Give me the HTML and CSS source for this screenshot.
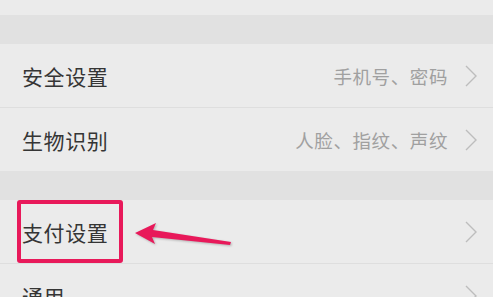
FILE: index.html
```html
<!DOCTYPE html>
<html lang="zh-CN">
<head>
<meta charset="utf-8">
<link rel="stylesheet" href="styles.css">
</head>
<body>
<div class="page">
  <div class="stub"></div>
  <div class="gap"></div>
  <div class="group">
    <div class="row">
      <span class="title">安全设置</span>
      <span class="right"><span class="sub">手机号、密码</span><svg class="chev" width="12" height="22" viewBox="0 0 12 22"><polyline points="1,1 11,11 1,21" fill="none" stroke="#bdbdbd" stroke-width="1.4"/></svg></span>
    </div>
    <div class="row">
      <span class="title">生物识别</span>
      <span class="right"><span class="sub">人脸、指纹、声纹</span><svg class="chev" width="12" height="22" viewBox="0 0 12 22"><polyline points="1,1 11,11 1,21" fill="none" stroke="#bdbdbd" stroke-width="1.4"/></svg></span>
    </div>
  </div>
  <div class="gap"></div>
  <div class="group">
    <div class="row">
      <span class="title">支付设置</span>
      <span class="right"><svg class="chev" width="12" height="22" viewBox="0 0 12 22"><polyline points="1,1 11,11 1,21" fill="none" stroke="#bdbdbd" stroke-width="1.4"/></svg></span>
    </div>
    <div class="row">
      <span class="title">通用</span>
      <span class="right"><svg class="chev" width="12" height="22" viewBox="0 0 12 22"><polyline points="1,1 11,11 1,21" fill="none" stroke="#bdbdbd" stroke-width="1.4"/></svg></span>
    </div>
  </div>
  <div class="highlight"></div>
  <svg class="arrow" width="110" height="32" viewBox="0 0 110 32">
    <polygon points="2,10 23,0 20,7 98,19 97,22 19,14 22,21" fill="#e8195a"/>
  </svg>
</div>
</body>
</html>
```
FILE: styles.css
```css
html, body {
  margin: 0;
  padding: 0;
  background: #ebebeb;
}
.page {
  position: relative;
  width: 493px;
  height: 297px;
  overflow: hidden;
  background: #ebebeb;
  font-family: "Noto Sans CJK SC", "Noto Sans", sans-serif;
}
.stub {
  height: 15px;
}
.gap {
  height: 29px;
  background: #e1e1e1;
}
.group {
  background: #ebebeb;
}
.row {
  height: 63px;
  display: flex;
  align-items: center;
  justify-content: space-between;
  padding: 0 16px 0 22px;
  position: relative;
}
.row + .row {
  border-top: 1px solid #dedede;
}
.title {
  font-size: 21px;
  color: #353535;
  letter-spacing: 0.6px;
}
.right {
  display: flex;
  align-items: center;
  gap: 17px;
}
.sub {
  font-size: 18.5px;
  color: #a0a0a0;
  letter-spacing: 0.6px;
}
.chev {
  display: block;
}
.highlight {
  position: absolute;
  left: 17px;
  top: 200px;
  width: 98px;
  height: 55px;
  border: 4px solid #e8195a;
  border-radius: 3px;
}
.arrow {
  position: absolute;
  left: 133px;
  top: 223px;
  filter: drop-shadow(1px 1px 1px rgba(0,0,0,0.25));
}
```
